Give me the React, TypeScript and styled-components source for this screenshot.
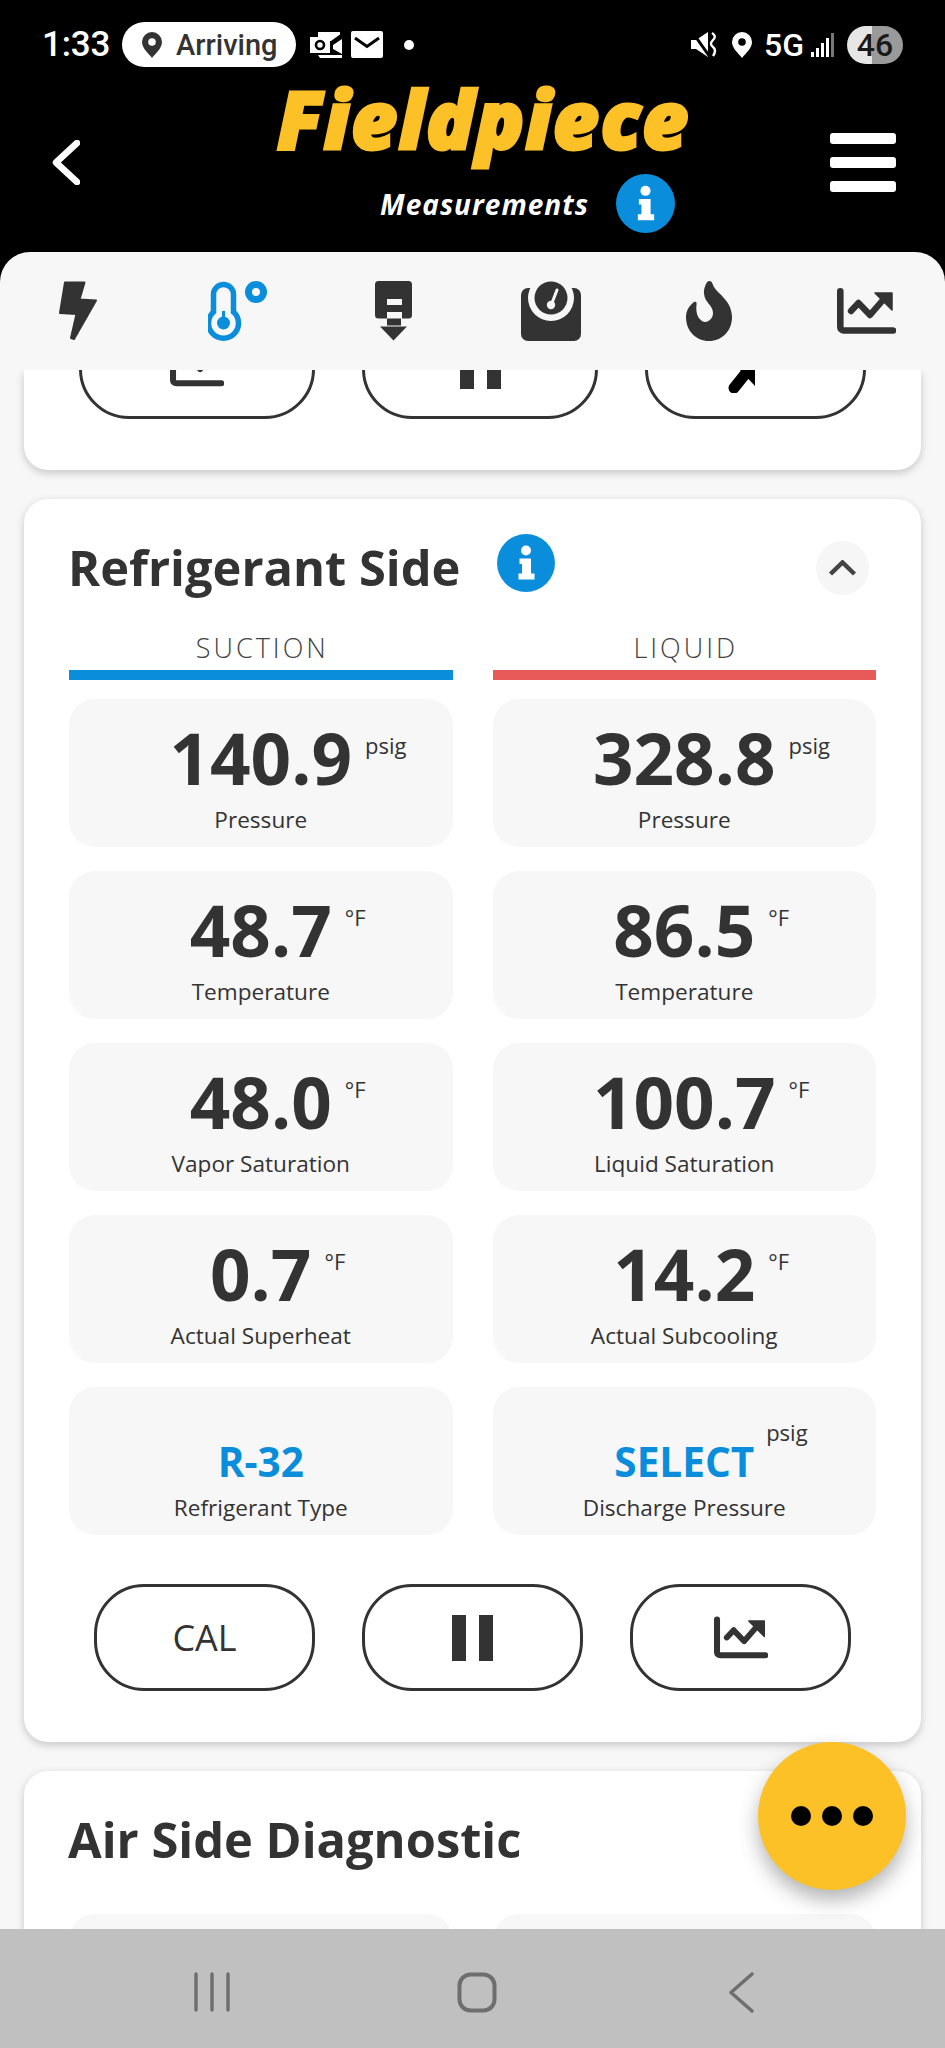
import React from "react";
import styled, { createGlobalStyle } from "styled-components";

const GlobalStyle = createGlobalStyle`
  html, body { margin: 0; padding: 0; background: #000; }
  * { box-sizing: border-box; }
  body { font-family: "Open Sans", "Noto Sans", sans-serif; }
`;

const Screen = styled.div`
  position: relative;
  width: 945px;
  height: 2048px;
  overflow: hidden;
  display: flex;
  flex-direction: column;
  background: #000;
`;

const StatusBar = styled.div`
  height: 45px;
  margin-top: 22px;
  padding: 0 42px 0 42px;
  display: flex;
  align-items: center;
  justify-content: space-between;
  color: #fff;
  font-family: Roboto, sans-serif;
  flex: none;
`;
const StatusGroup = styled.div`
  display: flex;
  align-items: center;
`;
const Time = styled.span`
  font-size: 35px;
  font-weight: 500;
  width: 68px;
  letter-spacing: -0.2px;
`;
const ArrivingPill = styled.div`
  width: 174px;
  height: 45px;
  margin: 0 14px 0 12px;
  padding-left: 20px;
  border-radius: 23px;
  background: #fff;
  color: #333;
  display: flex;
  align-items: center;
  gap: 14px;
  font-size: 29px;
  font-weight: 500;
`;
const FiveG = styled.span`
  font-size: 32px;
  font-weight: 500;
  margin: 0 7px 0 11px;
`;
const Battery = styled.div`
  width: 56px;
  height: 38px;
  margin-left: 12px;
  border-radius: 19px;
  background: linear-gradient(90deg, #e6e6e6 0 45%, #9a9a9a 45% 100%);
  color: #1a1a1a;
  display: flex;
  align-items: center;
  justify-content: center;
  font-size: 32px;
  font-weight: 500;
`;

const Header = styled.header`
  height: 185px;
  padding: 6px 49px 0 52px;
  display: flex;
  align-items: center;
  flex: none;
`;
const HeaderCenter = styled.div`
  flex: 1;
  align-self: flex-start;
  margin-top: 5px;
  display: flex;
  flex-direction: column;
  align-items: flex-start;
`;
const Logo = styled.div`
  margin-left: 197px;
  color: #fdc128;
  font-size: 80px;
  line-height: 80px;
  font-weight: 800;
  font-style: italic;
  letter-spacing: 1.3px;
  -webkit-text-stroke: 3px #fdc128;
`;
const SubRow = styled.div`
  margin: 16px 0 0 300px;
  display: flex;
  align-items: center;
  gap: 27px;
`;
const SubTitle = styled.span`
  color: #fff;
  font-size: 28px;
  font-weight: 700;
  font-style: italic;
  letter-spacing: 1px;
`;
const Hamburger = styled.div`
  width: 66px;
  display: flex;
  flex-direction: column;
  gap: 13px;
`;
const HamburgerBar = styled.span`
  height: 11px;
  border-radius: 3px;
  background: #fff;
`;

const Sheet = styled.main`
  flex: 1;
  min-height: 0;
  display: flex;
  flex-direction: column;
  background: #f7f7f7;
  border-radius: 30px 30px 0 0;
`;
const TabBar = styled.nav`
  height: 118px;
  padding-top: 29px;
  display: grid;
  grid-template-columns: repeat(6, 1fr);
  justify-items: center;
  align-items: start;
  flex: none;
`;
const Tab = styled.div<{ $top?: number; $shift?: number }>`
  display: flex;
  margin-top: ${(p) => p.$top ?? 0}px;
  margin-left: ${(p) => p.$shift ?? 0}px;
`;
const Scroller = styled.div`
  flex: 1;
  min-height: 0;
  padding: 0 24px;
  display: flex;
  flex-direction: column;
  gap: 29px;
  overflow: hidden;
`;
const Card = styled.section`
  flex: none;
  background: #fff;
  border-radius: 24px;
  box-shadow: 0 3px 8px rgba(0, 0, 0, 0.2);
  padding: 35px 45px 51px;
`;
const ClippedCard = styled(Card)`
  height: 100px;
  padding: 0 0 51px;
  display: flex;
  flex-direction: column;
  justify-content: flex-end;
  border-radius: 0 0 24px 24px;
  overflow: hidden;
`;
const OpenCard = styled(Card)`
  padding-bottom: 0;
  height: 400px;
`;
const CardHeader = styled.div`
  height: 61px;
  padding-right: 7px;
  display: flex;
  align-items: flex-start;
`;
const CardTitle = styled.h2`
  margin: 3px 37px 0 -1px;
  color: #333;
  font-size: 48.8px;
  line-height: 61px;
  font-weight: 700;
  white-space: nowrap;
`;
const Collapse = styled.div`
  width: 53px;
  height: 54px;
  margin: 7px 0 0 auto;
  border-radius: 50%;
  background: #f6f6f6;
  display: flex;
  align-items: center;
  justify-content: center;
`;
const SideHeads = styled.div`
  margin-top: 38px;
  display: grid;
  grid-template-columns: 1fr 1fr;
  column-gap: 40px;
`;
const SideHead = styled.div<{ $color: string }>`
  color: #444;
  font-size: 27px;
  line-height: 30px;
  font-weight: 300;
  letter-spacing: 3px;
  text-indent: 3px;
  text-align: center;
  padding-bottom: 7px;
  &::after {
    content: "";
    display: block;
    height: 10px;
    margin-top: 7px;
    background: ${(p) => p.$color};
  }
`;
const TileGrid = styled.div`
  margin-top: 12px;
  display: grid;
  grid-template-columns: 1fr 1fr;
  column-gap: 40px;
  row-gap: 24px;
`;
const AirTileGrid = styled(TileGrid)`
  margin-top: 47px;
`;
const Tile = styled.div`
  height: 148px;
  padding-top: 23px;
  border-radius: 26px;
  background: #f7f7f7;
  display: flex;
  flex-direction: column;
  align-items: center;
`;
const ValueWrap = styled.div`
  position: relative;
`;
const Value = styled.div<{ $accent?: boolean }>`
  color: ${(p) => (p.$accent ? "#0a8ddb" : "#333")};
  font-size: ${(p) => (p.$accent ? 40.5 : 71)}px;
  line-height: 72px;
  font-weight: 700;
  ${(p) => (p.$accent ? "margin: 16px 0 -16px;" : "")}
`;
const Unit = styled.span<{ $accent?: boolean }>`
  position: absolute;
  left: 100%;
  top: ${(p) => (p.$accent ? 9 : 10)}px;
  margin-left: ${(p) => (p.$accent ? 12 : 13)}px;
  color: #333;
  font-size: 22px;
  line-height: 26px;
`;
const Label = styled.div`
  margin-top: 11px;
  color: #333;
  font-size: 22.6px;
  line-height: 30px;
  white-space: nowrap;
`;
const ButtonRow = styled.div<{ $inset: number; $top?: number }>`
  margin: ${(p) => p.$top ?? 0}px 0 0 ${(p) => p.$inset}px;
  display: flex;
  gap: 47px;
`;
const RoundButton = styled.div<{ $width: number }>`
  width: ${(p) => p.$width}px;
  height: 107px;
  flex: none;
  border: 3px solid #333;
  border-radius: 50px;
  background: #fff;
  color: #333;
  display: flex;
  align-items: center;
  justify-content: center;
  font-size: 36px;
  font-weight: 400;
`;
const PauseGlyph = styled.div`
  display: flex;
  gap: 13px;
`;
const PauseBar = styled.span`
  width: 14px;
  height: 46px;
  background: #333;
`;

const Fab = styled.div`
  position: absolute;
  left: 758px;
  top: 1742px;
  width: 148px;
  height: 148px;
  border-radius: 50%;
  background: #fdc128;
  box-shadow: 0 10px 20px rgba(0, 0, 0, 0.3);
  display: flex;
  align-items: center;
  justify-content: center;
  gap: 11px;
`;
const FabDot = styled.span`
  width: 20px;
  height: 20px;
  border-radius: 50%;
  background: #000;
`;

const NavBar = styled.footer`
  height: 119px;
  flex: none;
  position: relative;
  background: #c0c0c0;
  padding: 43px 191px 0 194px;
  display: flex;
  justify-content: space-between;
  align-items: flex-start;
`;

const DARK = "#333";
const BLUE = "#0a8ddb";

const Info = ({ size }: { size: number }) => (
  <svg width={size} height={size} viewBox="0 0 58 58">
    <circle cx="29" cy="29" r="29" fill={BLUE} />
    <circle cx="29" cy="16.500" r="5" fill="#fff" />
    <path d="M22.500 24.500H34V39.500H37.500V45.500H21.500V39.500H25V30H22.500Z" fill="#fff" />
  </svg>
);

const Pin = ({ fill, hole, w, h }: { fill: string; hole: string; w: number; h: number }) => (
  <svg width={w} height={h} viewBox="0 0 20 26">
    <path d="M10 0A10 10 0 0 1 20 10C20 16 14 21 10 26C6 21 0 16 0 10A10 10 0 0 1 10 0Z" fill={fill} />
    <circle cx="10" cy="10" r="3.800" fill={hole} />
  </svg>
);

const ChartIcon = ({ w, h }: { w: number; h: number }) => (
  <svg width={w} height={h} viewBox="0 0 59 46">
    <path d="M3.300 3.300V39a3.500 3.500 0 0 0 3.500 3.500H56" fill="none" stroke={DARK} strokeWidth="6.600" strokeLinecap="round" strokeLinejoin="round" />
    <path d="M14 23L21.500 15L33 27L46 12" fill="none" stroke={DARK} strokeWidth="6.400" strokeLinecap="round" strokeLinejoin="round" />
    <path d="M38 5H55V22Z" fill={DARK} stroke={DARK} strokeWidth="1.500" strokeLinejoin="round" />
  </svg>
);

const metrics: [string, string, string, string, string, string][] = [
  ["140.9", "psig", "Pressure", "328.8", "psig", "Pressure"],
  ["48.7", "°F", "Temperature", "86.5", "°F", "Temperature"],
  ["48.0", "°F", "Vapor Saturation", "100.7", "°F", "Liquid Saturation"],
  ["0.7", "°F", "Actual Superheat", "14.2", "°F", "Actual Subcooling"],
];

const Metric = ({ value, unit, label, accent }: { value: string; unit?: string; label: string; accent?: boolean }) => (
  <Tile>
    <ValueWrap>
      <Value $accent={accent}>{value}</Value>
      {unit && <Unit $accent={accent}>{unit}</Unit>}
    </ValueWrap>
    <Label>{label}</Label>
  </Tile>
);

export default function App() {
  return (
    <Screen>
      <GlobalStyle />
      <StatusBar>
        <StatusGroup>
          <Time>1:33</Time>
          <ArrivingPill>
            <Pin fill="#333" hole="#fff" w={20} h={26} />
            Arriving
          </ArrivingPill>
          <svg width="32" height="26" viewBox="0 0 32 26" style={{ marginRight: 9 }}>
            <path d="M8 0H30V2.500L21 9H8Z" fill="#fff" />
            <path d="M0 5H20V21H0Z" fill="#fff" />
            <circle cx="10" cy="13" r="4" fill="none" stroke="#000" strokeWidth="2.600" />
            <path d="M23 13L32 7V22L23 17ZM8 23H32V26H10Z" fill="#fff" />
          </svg>
          <svg width="32" height="27" viewBox="0 0 32 27" style={{ marginRight: 21 }}>
            <rect width="32" height="27" rx="2" fill="#fff" />
            <path d="M4 7L16 15.500L28 7" fill="none" stroke="#000" strokeWidth="3" />
          </svg>
          <svg width="10" height="10" viewBox="0 0 10 10">
            <circle cx="5" cy="5" r="5" fill="#fff" />
          </svg>
        </StatusGroup>
        <StatusGroup>
          <svg width="27" height="25" viewBox="0 0 27 25" style={{ marginRight: 13 }}>
            <path d="M0 8H5L17 0V25L5 17H0Z" fill="#fff" />
            <path d="M2 1L19 25" stroke="#000" strokeWidth="3" />
            <path d="M21 1Q26 4 22 8T22 15Q26 18 22 24" fill="none" stroke="#fff" strokeWidth="2.400" />
          </svg>
          <Pin fill="#fff" hole="#000" w={22} h={26} />
          <FiveG>5G</FiveG>
          <svg width="24" height="24" viewBox="0 0 24 24">
            <rect x="0" y="19" width="3" height="5" fill="#fff" />
            <rect x="5" y="15" width="3" height="9" fill="#fff" />
            <rect x="10" y="10" width="3" height="14" fill="#fff" />
            <rect x="15" y="5" width="3" height="19" fill="#fff" />
            <rect x="20" y="0" width="3" height="24" fill="#777" />
          </svg>
          <Battery>46</Battery>
        </StatusGroup>
      </StatusBar>

      <Header>
        <svg width="28" height="45" viewBox="0 0 28 45" style={{ flex: "none" }}>
          <path d="M25 3L4 22.500L25 42" fill="none" stroke="#fff" strokeWidth="6.500" strokeLinecap="round" strokeLinejoin="round" />
        </svg>
        <HeaderCenter>
          <Logo>Fieldpiece</Logo>
          <SubRow>
            <SubTitle>Measurements</SubTitle>
            <Info size={59} />
          </SubRow>
        </HeaderCenter>
        <Hamburger>
          <HamburgerBar />
          <HamburgerBar />
          <HamburgerBar />
        </Hamburger>
      </Header>

      <Sheet>
        <TabBar>
          <Tab $shift={-2}>
            <svg width="38" height="60" viewBox="0 0 38 60">
              <path d="M6 1.500H25.500L20.500 18.500L37 19.500L15 58L12 57L17.500 33L1 32Z" fill={DARK} stroke={DARK} strokeWidth="2" strokeLinejoin="round" />
            </svg>
          </Tab>
          <Tab $shift={2}>
            <svg width="59" height="60" viewBox="0 0 59 60">
              <path d="M5.500 13.500a10 10 0 0 1 20 0V31a15 15 0 1 1 -20 0Z" fill="none" stroke={BLUE} strokeWidth="5.500" />
              <circle cx="15.500" cy="42" r="6.500" fill={BLUE} />
              <rect x="14" y="30" width="3" height="10" fill={BLUE} />
              <circle cx="48" cy="11" r="7.500" fill="none" stroke={BLUE} strokeWidth="7" />
            </svg>
          </Tab>
          <Tab>
            <svg width="38" height="60" viewBox="0 0 38 60">
              <path d="M3.500 0H33.500a3.500 3.500 0 0 1 3.500 3.500V34a3.500 3.500 0 0 1 -3.500 3.500H27V31H12V37.500H3.500a3.500 3.500 0 0 1 -3.500 -3.500V3.500a3.500 3.500 0 0 1 3.500 -3.500Z" fill={DARK} />
              <rect x="12" y="18" width="15" height="6" fill="#f7f7f7" />
              <rect x="12" y="37.500" width="14" height="7" fill={DARK} />
              <path d="M5 45.500H32L18.500 59.500Z" fill={DARK} />
            </svg>
          </Tab>
          <Tab>
            <svg width="60" height="60" viewBox="0 0 60 60">
              <rect x="0" y="7" width="60" height="53" rx="7" fill={DARK} />
              <circle cx="30" cy="17" r="23" fill="#f7f7f7" />
              <circle cx="30" cy="17" r="16.500" fill={DARK} />
              <path d="M36 9L31 22" stroke="#f7f7f7" strokeWidth="3" strokeLinecap="round" />
              <circle cx="30" cy="24" r="4.200" fill="#f7f7f7" />
            </svg>
          </Tab>
          <Tab>
            <svg width="46" height="60" viewBox="0 0 46 60">
              <path d="M23.500 0C26 0 26.500 3 28 6C32 13 46 20 46 36C46 50 36 60 23 60C10 60 0 50 0 36C0 29 4 24 8 21C10 20 11 21 10.500 24C10 28 10 36 16 40C21 43 27 38 27 32C27 24 19 22 18 13C17.500 8 20 0 23.500 0Z" fill={DARK} />
            </svg>
          </Tab>
          <Tab $top={7}>
            <ChartIcon w={59} h={46} />
          </Tab>
        </TabBar>

        <Scroller>
          <ClippedCard>
            <ButtonRow $inset={55}>
              <RoundButton $width={236}>
                <ChartIcon w={54} h={47} />
              </RoundButton>
              <RoundButton $width={236}>
                <PauseGlyph>
                  <PauseBar />
                  <PauseBar />
                </PauseGlyph>
              </RoundButton>
              <RoundButton $width={221}>
                <svg width="52" height="54" viewBox="0 0 52 54" style={{ marginLeft: -4 }}>
                  <path d="M6 49L22 29" stroke="#000" strokeWidth="11" strokeLinecap="round" />
                  <path d="M27 47V0H-17Z" fill="#000" />
                </svg>
              </RoundButton>
            </ButtonRow>
          </ClippedCard>

          <Card>
            <CardHeader>
              <CardTitle>Refrigerant Side</CardTitle>
              <Info size={58} />
              <Collapse>
                <svg width="29" height="16" viewBox="0 0 29 16">
                  <path d="M2.500 14L14.500 2.500L26.500 14" fill="none" stroke="#444" strokeWidth="4.500" />
                </svg>
              </Collapse>
            </CardHeader>
            <SideHeads>
              <SideHead $color={BLUE}>SUCTION</SideHead>
              <SideHead $color="#e85a5a">LIQUID</SideHead>
            </SideHeads>
            <TileGrid>
              {metrics.map((m) => (
                <React.Fragment key={m[2] + m[5]}>
                  <Metric value={m[0]} unit={m[1]} label={m[2]} />
                  <Metric value={m[3]} unit={m[4]} label={m[5]} />
                </React.Fragment>
              ))}
              <Metric value="R-32" label="Refrigerant Type" accent />
              <Metric value="SELECT" unit="psig" label="Discharge Pressure" accent />
            </TileGrid>
            <ButtonRow $inset={25} $top={49}>
              <RoundButton $width={221}>CAL</RoundButton>
              <RoundButton $width={221}>
                <PauseGlyph>
                  <PauseBar />
                  <PauseBar />
                </PauseGlyph>
              </RoundButton>
              <RoundButton $width={221}>
                <ChartIcon w={54} h={47} />
              </RoundButton>
            </ButtonRow>
          </Card>

          <OpenCard>
            <CardHeader>
              <CardTitle>Air Side Diagnostic</CardTitle>
            </CardHeader>
            <AirTileGrid>
              <Tile />
              <Tile />
            </AirTileGrid>
          </OpenCard>
        </Scroller>
      </Sheet>

      <NavBar>
        <svg width="36" height="40" viewBox="0 0 36 40">
          <path d="M2 2V38M18 2V38M34 2V38" stroke="#6e6e6e" strokeWidth="3.500" strokeLinecap="round" />
        </svg>
        <svg width="40" height="41" viewBox="0 0 40 41" style={{ marginLeft: -4 }}>
          <rect x="2.500" y="2.500" width="35" height="36" rx="11" fill="none" stroke="#6e6e6e" strokeWidth="4" />
        </svg>
        <svg width="26" height="41" viewBox="0 0 26 41">
          <path d="M24 2L3 20.500L24 39" fill="none" stroke="#6e6e6e" strokeWidth="3.500" strokeLinecap="round" strokeLinejoin="round" />
        </svg>
      </NavBar>

      <Fab>
        <FabDot />
        <FabDot />
        <FabDot />
      </Fab>
    </Screen>
  );
}
